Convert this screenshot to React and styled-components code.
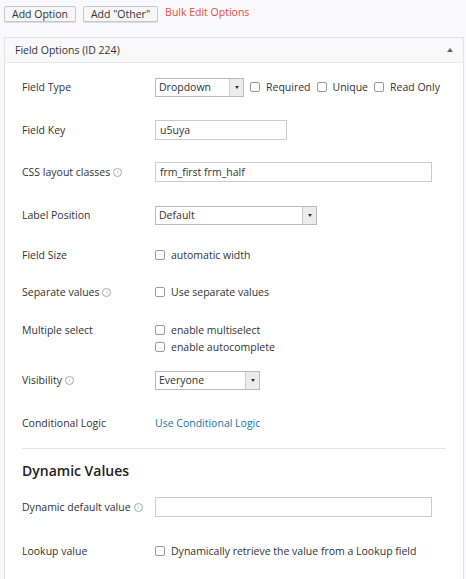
import React from 'react';
import styled, { createGlobalStyle } from 'styled-components';

const Global = createGlobalStyle`
  body { margin: 0; background: #f9f9fb; font-family: 'Open Sans', 'Liberation Sans', sans-serif; font-size: 10.5px; color: #333; }
`;

const Page = styled.div`
  padding: 6px 4px 0 4px;
`;

const TopBar = styled.div`
  display: flex;
  align-items: center;
  gap: 7px;
  margin-bottom: 15px;
`;

const Btn = styled.button`
  font-family: inherit;
  font-size: 10.5px;
  color: #333;
  background: #f7f7f7;
  border: 1px solid #c8c8c8;
  border-radius: 2px;
  height: 16px;
  padding: 0 7px;
  box-shadow: 0 1px 0 #ddd;
`;

const RedLink = styled.span`
  color: #e14d43;
  font-size: 10.5px;
  margin-top: -4px;
`;

const Panel = styled.div`
  border: 1px solid #e3e3e3;
  background: #fff;
  width: 458px;
`;

const PanelHead = styled.div`
  height: 24px;
  display: flex;
  align-items: center;
  justify-content: space-between;
  padding: 0 10px;
  background: #f9f9f9;
  border-bottom: 1px solid #e8e8e8;
`;

const Arrow = styled.span`
  width: 0; height: 0;
  border-left: 3px solid transparent;
  border-right: 3px solid transparent;
  border-bottom: 4px solid #666;
`;

const Body = styled.div`
  padding: 0 30px 0 17px;
`;

const Row = styled.div`
  display: flex;
  align-items: ${p => p.$top ? 'flex-start' : 'center'};
  height: ${p => p.$h}px;
  padding-top: ${p => p.$pt || 0}px;
  box-sizing: border-box;
`;

const Label = styled.div`
  width: 133px;
  flex-shrink: 0;
  color: #333;
  display: flex;
  align-items: center;
  gap: 3px;
  white-space: nowrap;
`;

const Info = styled.span`
  display: inline-flex;
  width: 7px; height: 7px;
  border: 1px solid #aaa;
  border-radius: 50%;
  font-size: 6px;
  color: #aaa;
  align-items: center;
  justify-content: center;
  line-height: 1;
`;

const Controls = styled.div`
  display: flex;
  flex-direction: ${p => p.$col ? 'column' : 'row'};
  align-items: ${p => p.$col ? 'flex-start' : 'center'};
  gap: ${p => p.$col ? '3px' : '6px'};
  flex: 1;
  white-space: nowrap;
`;

const Select = styled.div`
  width: ${p => p.$w}px;
  height: 19px;
  border: 1px solid #bbb;
  display: flex;
  align-items: stretch;
  box-sizing: border-box;
  background: #fff;
`;

const SelText = styled.span`
  flex: 1;
  padding-left: 3px;
  display: flex;
  align-items: center;
`;

const SelBtn = styled.span`
  width: 13px;
  background: #ececec;
  border-left: 1px solid #ccc;
  display: flex;
  align-items: center;
  justify-content: center;
  &::after {
    content: '';
    border-left: 2px solid transparent;
    border-right: 2px solid transparent;
    border-top: 3px solid #333;
  }
`;

const TextBox = styled.div`
  width: ${p => p.$w}px;
  height: 20px;
  border: 1px solid #ccc;
  box-sizing: border-box;
  padding-left: 4px;
  display: flex;
  align-items: center;
`;

const Check = styled.label`
  display: flex;
  align-items: center;
  gap: 6px;
  &::before {
    content: '';
    width: 8px; height: 8px;
    border: 1px solid #999;
    border-radius: 2px;
    background: #fff;
  }
`;

const Link = styled.span`
  color: #21759b;
`;

const Divider = styled.div`
  height: 1px;
  background: #e5e5e5;
  margin-right: -13px;
`;

const Heading = styled.div`
  font-size: 14px;
  font-weight: 600;
  color: #222;
  height: 42px;
  display: flex;
  align-items: center;
`;

const Sel = ({ w, children }) => (
  <Select $w={w}><SelText>{children}</SelText><SelBtn /></Select>
);

export default function App() {
  return (
    <Page>
      <Global />
      <TopBar>
        <Btn>Add Option</Btn>
        <Btn>Add "Other"</Btn>
        <RedLink>Bulk Edit Options</RedLink>
      </TopBar>
      <Panel>
        <PanelHead>Field Options (ID 224)<Arrow /></PanelHead>
        <Body>
          <Row $h={48}>
            <Label>Field Type</Label>
            <Controls>
              <Sel w={89}>Dropdown</Sel>
              <Check>Required</Check>
              <Check>Unique</Check>
              <Check>Read Only</Check>
            </Controls>
          </Row>
          <Row $h={38}>
            <Label>Field Key</Label>
            <Controls><TextBox $w={132}>u5uya</TextBox></Controls>
          </Row>
          <Row $h={46}>
            <Label>CSS layout classes <Info>i</Info></Label>
            <Controls><TextBox $w={277}>frm_first frm_half</TextBox></Controls>
          </Row>
          <Row $h={40}>
            <Label>Label Position</Label>
            <Controls><Sel w={162}>Default</Sel></Controls>
          </Row>
          <Row $h={40}>
            <Label>Field Size</Label>
            <Controls><Check>automatic width</Check></Controls>
          </Row>
          <Row $h={34}>
            <Label>Separate values <Info>i</Info></Label>
            <Controls><Check>Use separate values</Check></Controls>
          </Row>
          <Row $h={53} $top $pt={14}>
            <Label>Multiple select</Label>
            <Controls $col>
              <Check>enable multiselect</Check>
              <Check>enable autocomplete</Check>
            </Controls>
          </Row>
          <Row $h={36}>
            <Label>Visibility <Info>i</Info></Label>
            <Controls><Sel w={105}>Everyone</Sel></Controls>
          </Row>
          <Row $h={50}>
            <Label>Conditional Logic</Label>
            <Controls><Link>Use Conditional Logic</Link></Controls>
          </Row>
          <Divider />
          <Heading>Dynamic Values</Heading>
          <Row $h={32}>
            <Label>Dynamic default value <Info>i</Info></Label>
            <Controls><TextBox $w={277} /></Controls>
          </Row>
          <Row $h={56}>
            <Label>Lookup value</Label>
            <Controls><Check>Dynamically retrieve the value from a Lookup field</Check></Controls>
          </Row>
        </Body>
      </Panel>
    </Page>
  );
}
